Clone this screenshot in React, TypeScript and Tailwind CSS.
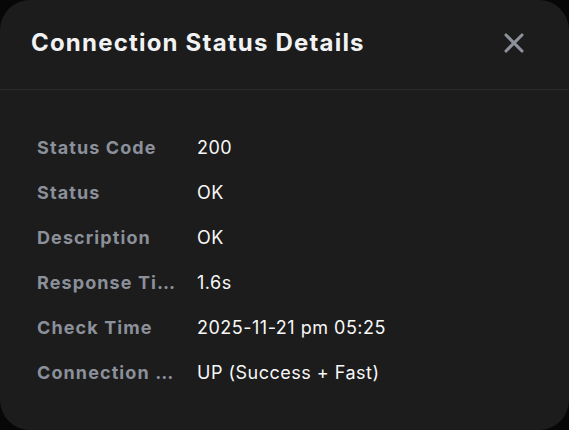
import { X } from 'lucide-react';

type Row = {
  label: string;
  value: string;
};

const rows: Row[] = [
  { label: 'Status Code', value: '200' },
  { label: 'Status', value: 'OK' },
  { label: 'Description', value: 'OK' },
  { label: 'Response Time', value: '1.6s' },
  { label: 'Check Time', value: '2025-11-21 pm 05:25' },
  { label: 'Connection Status', value: 'UP (Success + Fast)' },
];

export default function App() {
  return (
    <div
      className="h-[430px] w-[569px] bg-[#070707]"
      style={{ fontFamily: 'Inter, "Noto Sans", sans-serif' }}
    >
      <div
        role="dialog"
        aria-modal="true"
        aria-labelledby="status-title"
        className="flex h-full w-full flex-col overflow-hidden rounded-[30px] bg-[#1c1c1c]"
      >
        <div className="flex h-[90px] shrink-0 items-center justify-between border-b border-[#2b2b2b] pb-[3px] pl-[31px] pr-[39px]">
          <h2 id="status-title" className="text-[24px] font-bold tracking-[1.2px] text-[#f1f2f4]">
            Connection Status Details
          </h2>
          <button type="button" className="text-[#8d919b]">
            <X size={32} strokeWidth={2.3} />
          </button>
        </div>

        <div className="flex flex-col px-[37px] pt-[35px]">
          {rows.map((row) => (
            <div key={row.label} className="flex h-[45px] items-center text-[18px]">
              <span className="w-[142px] shrink-0 truncate font-bold tracking-[1.1px] text-[#8b909a]">
                {row.label}
              </span>
              <span className="ml-[18px] tracking-[0.5px] text-[#f7f7f7]">{row.value}</span>
            </div>
          ))}
        </div>
      </div>
    </div>
  );
}
